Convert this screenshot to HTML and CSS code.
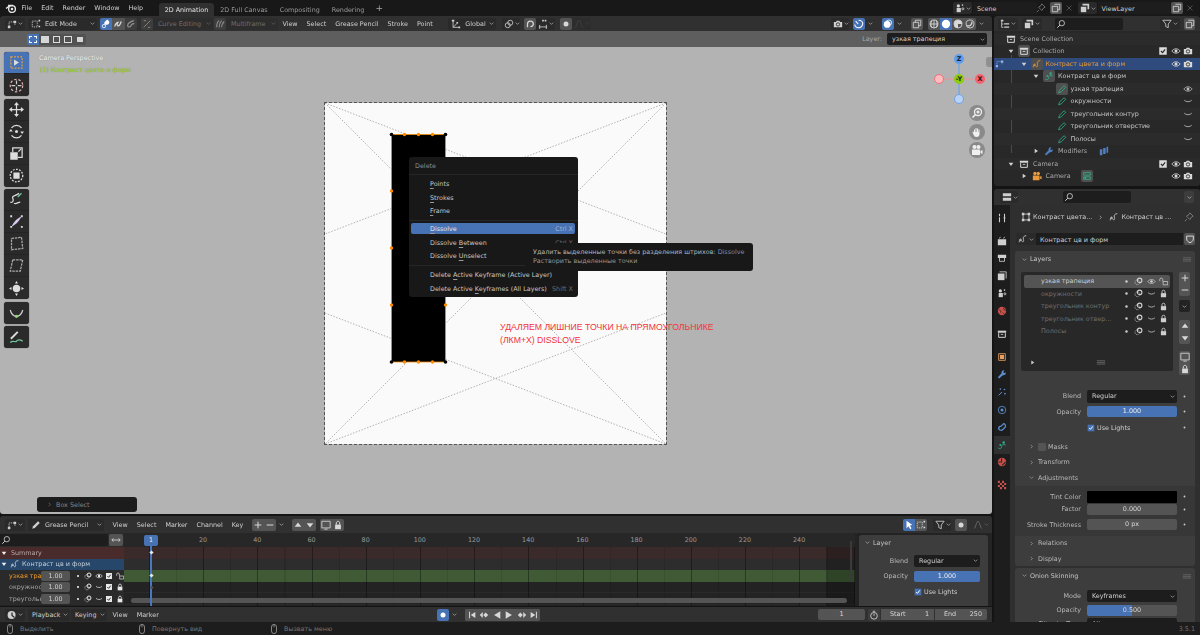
FILE: index.html
```html
<!DOCTYPE html>
<html lang="ru">
<head>
<meta charset="UTF-8">
<title>Blender</title>
<link rel="stylesheet" href="styles.css">
</head>
<body>
<svg class="defs" width="0" height="0">
  <symbol id="chev" viewBox="0 0 12 12"><path d="M3 4.500l3 3 3-3"/></symbol>
  <symbol id="right" viewBox="0 0 12 12"><path d="M4.500 3l3 3-3 3"/></symbol>
  <symbol id="tri-d" viewBox="0 0 12 12"><path class="fl" d="M2.500 4h7L6 9z"/></symbol>
  <symbol id="tri-r" viewBox="0 0 12 12"><path class="fl" d="M4 2.500v7L9 6z"/></symbol>
  <symbol id="logo" viewBox="0 0 12 12"><circle cx="7" cy="7" r="3.400" stroke-width="1.400"/><circle class="fl" cx="7" cy="7" r="1.300"/><path stroke-width="1.400" d="M1 6.500l4-3M3 3.500h5"/></symbol>
  <symbol id="gp-edit" viewBox="0 0 12 12"><path stroke-dasharray="1.500 1" d="M2.500 9V3.500h7V7"/><path class="fl" d="M1 8h3v3H1zM8 2h3v3H8z"/></symbol>
  <symbol id="box" viewBox="0 0 12 12"><path stroke-dasharray="1.600 1" d="M1.500 2.500h6v7h-6z"/><path class="fl" d="M9 1h2v2H9zM9 8h2v2H9z"/></symbol>
  <symbol id="gpo" viewBox="0 0 12 12"><path d="M1.500 10c0-4 2-3 3-1.500s3 1 2-2 1-4.500 3.500-4.500"/><circle cx="3" cy="7" r="1"/></symbol>
  <symbol id="gpd" viewBox="0 0 12 12"><path d="M1.500 9.500c2 1.500 4 1 4-1.500s2-3 5-2"/><circle class="fl" cx="8" cy="3" r="1.500"/><circle class="fl" cx="4" cy="6" r="1.200"/></symbol>
  <symbol id="pen" viewBox="0 0 12 12"><path d="M2 10.500l1-3 5.500-5.500 2 2L5 9.500z"/></symbol>
  <symbol id="pen-f" viewBox="0 0 12 12"><path class="fl" d="M1.500 10.500l1-3L8.500 1.500l2 2-6 6z"/></symbol>
  <symbol id="coll" viewBox="0 0 12 12"><path class="fl" d="M1 2h10v2.500H1z"/><path stroke-width="1.200" d="M2 5v5h8V5"/><path d="M4.500 6.500h3"/></symbol>
  <symbol id="eye" viewBox="0 0 12 12"><path d="M1 6c2.500-3.500 7.500-3.500 10 0-2.500 3.500-7.500 3.500-10 0z"/><circle class="fl" cx="6" cy="6" r="1.800"/></symbol>
  <symbol id="eye-off" viewBox="0 0 12 12"><path d="M1.500 5c2.500 2.400 6.500 2.400 9 0"/></symbol>
  <symbol id="cam" viewBox="0 0 12 12"><path class="fl" d="M1 3.500h2.500l1-1.500h3l1 1.500H11v6.500H1z"/><circle class="cut" cx="6" cy="6.500" r="2"/></symbol>
  <symbol id="check" viewBox="0 0 12 12"><path class="fl" d="M1.500 1.500h9v9h-9z"/><path class="cut" stroke-width="1.400" d="M3.500 6l2 2 3-4"/></symbol>
  <symbol id="check-on" viewBox="0 0 12 12"><path class="blue" d="M1 1h10v10H1z"/><path stroke="#fff" stroke-width="1.500" d="M3.200 6l2 2 3.500-4.500"/></symbol>
  <symbol id="lock" viewBox="0 0 12 12"><path class="fl" d="M2.500 5.500h7v5.500h-7z"/><path stroke-width="1.200" d="M4 5.500V3.500c0-2.500 4-2.500 4 0v2"/></symbol>
  <symbol id="unlock" viewBox="0 0 12 12"><path d="M5.500 6h6v4.500h-6z"/><path d="M1 5.500V3c0-2 4-2 4 0v3"/></symbol>
  <symbol id="mask" viewBox="0 0 12 12"><circle cx="4.500" cy="7" r="3.200" stroke-dasharray="1 .7"/><circle cx="7.500" cy="4.500" r="3" stroke-width="1.500"/></symbol>
  <symbol id="dot" viewBox="0 0 12 12"><circle class="fl" cx="6" cy="6" r="1.600"/></symbol>
  <symbol id="search" viewBox="0 0 12 12"><circle cx="7" cy="5" r="3.200"/><path stroke-width="1.200" d="M4.700 7.300L1.500 10.500"/></symbol>
  <symbol id="filter" viewBox="0 0 12 12"><path d="M1 1.500h10L7.500 6v4.500l-3-1.500V6z"/></symbol>
  <symbol id="pin" viewBox="0 0 12 12"><path d="M7 1l4 4-2 1-2 3-4-4 3-2zM3.500 8.500L1 11"/></symbol>
  <symbol id="copy" viewBox="0 0 12 12"><path d="M4 1.500h6.500V8H8.500"/><path d="M1.500 4h6.500v6.500H1.500z"/></symbol>
  <symbol id="close" viewBox="0 0 12 12"><path d="M3 3l6 6M9 3l-6 6"/></symbol>
  <symbol id="scene" viewBox="0 0 12 12"><path class="fl" d="M2 6h5v5H2z"/><circle class="fl" cx="4" cy="3.500" r="2"/><circle cx="9.500" cy="7" r="1.200"/><circle class="fl" cx="9" cy="2.500" r="1"/></symbol>
  <symbol id="layers" viewBox="0 0 12 12"><path class="fl" d="M3 1h8v6.500H9V3H3z"/><path class="fl" d="M1 4.500h6.500V11H1z"/></symbol>
  <symbol id="outl" viewBox="0 0 12 12"><path class="fl" d="M1 1h3v2H1zM5 5h6v1.500H5zM5 9h6v1.500H5z"/><path d="M2 3v7h2M2 6h2"/></symbol>
  <symbol id="prop" viewBox="0 0 12 12"><path class="fl" d="M1 1.500h10V5H1zM1 7h10v3.500H1z"/></symbol>
  <symbol id="snap" viewBox="0 0 12 12"><circle cx="7.500" cy="4.500" r="3"/><circle cx="4.500" cy="7.500" r="3"/></symbol>
  <symbol id="magnet" viewBox="0 0 12 12"><path stroke-width="1.500" d="M3 10V6a3.500 3.500 0 017 0c0 3-2.500 3-3.500 3"/></symbol>
  <symbol id="grid" viewBox="0 0 12 12"><path d="M1 9.500h10M2 7v5M10 7v5"/><path class="fl" d="M5 1h2v2H5zM8 1h2v2H8z"/></symbol>
  <symbol id="falloff" viewBox="0 0 12 12"><path d="M1 10.500c2.500-1 3-9 5-9s2.500 8 5 9"/></symbol>
  <symbol id="orient" viewBox="0 0 12 12"><path d="M2.500 2v8h8M2.500 10l5-5"/><path class="fl" d="M1 1h3v2H1zM9 9h2v2H9zM6.500 3.500h2v2h-2z"/></symbol>
  <symbol id="bezier" viewBox="0 0 12 12"><path d="M2 10L10 2M2 2h3M10 10H7"/></symbol>
  <symbol id="multi" viewBox="0 0 12 12"><path stroke-width="1.300" d="M2 10c0-5 1-7 3-8M5 10c0-4 1-6 3-8M8 10c0-3 1-5 3-7"/></symbol>
  <symbol id="brush1" viewBox="0 0 12 12"><path class="fl" d="M8 1c1 1 2 2 2 3.500S8 7 6 7 3 5 5 3s2-2 3-2z"/><circle cx="3.500" cy="8.500" r="2"/></symbol>
  <symbol id="brush2" viewBox="0 0 12 12"><path stroke-width="1.500" d="M2 9c1-3 2-5 4-5-2 2-1 5 1 4s2-4 3-5"/></symbol>
  <symbol id="brush3" viewBox="0 0 12 12"><path stroke-width="1.500" d="M9.500 2C6 3 2 5 2 8c0 2 3 2 4 0s3-3 4-2"/></symbol>
  <symbol id="gizmo" viewBox="0 0 12 12"><path stroke-width="1.300" d="M5.500 1.500c3 0 5 2 5 4s-2 5-5 5-4.500-2-4.500-4M2 2.500L5 6"/></symbol>
  <symbol id="overlay" viewBox="0 0 12 12"><circle class="fl" cx="5" cy="6.500" r="4"/><circle cx="7" cy="4.500" r="3.300"/></symbol>
  <symbol id="xray" viewBox="0 0 12 12"><path d="M1.500 4h6.500v6.500H1.500zM4 4V1.500h6.500V8H8"/></symbol>
  <symbol id="wire" viewBox="0 0 12 12"><circle cx="6" cy="6" r="4.800"/><path d="M1.200 6h9.600M6 1.200v9.600M3.500 2c-1.500 2-1.500 6 0 8M8.500 2c1.500 2 1.500 6 0 8"/></symbol>
  <symbol id="solid" viewBox="0 0 12 12"><circle class="fl" cx="6" cy="6" r="5"/></symbol>
  <symbol id="matp" viewBox="0 0 12 12"><circle cx="6" cy="6" r="4.800"/><path class="fl" d="M6 1.200a4.800 4.800 0 014.800 4.800H6v4.800A4.800 4.800 0 016 1.200z"/></symbol>
  <symbol id="rend" viewBox="0 0 12 12"><circle cx="6" cy="6" r="4.800"/><path stroke-width="1.500" d="M2.500 8c3 1 6-1 6-5"/></symbol>
  <symbol id="gp-vis" viewBox="0 0 12 12"><path d="M1 1.500h10v8H1zM4 11h4"/></symbol>
  <symbol id="up" viewBox="0 0 12 12"><path class="fl" d="M6 3l4 5H2z"/></symbol>
  <symbol id="down" viewBox="0 0 12 12"><path class="fl" d="M6 9l4-5H2z"/></symbol>
  <symbol id="plus" viewBox="0 0 12 12"><path stroke-width="1.200" d="M6 2v8M2 6h8"/></symbol>
  <symbol id="minus" viewBox="0 0 12 12"><path stroke-width="1.200" d="M2 6h8"/></symbol>
  <symbol id="arrows" viewBox="0 0 12 12"><path d="M1 6h10M3 4L1 6l2 2M9 4l2 2-2 2"/></symbol>
  <symbol id="shield" viewBox="0 0 12 12"><path stroke-width="1.200" d="M2 2.500h8V6c0 2.500-2 3.500-4 4.500C4 9.500 2 8.500 2 6z"/></symbol>
  <symbol id="grip" viewBox="0 0 12 12"><path d="M1 4.500h10M1 6.500h10M1 8.500h10"/></symbol>
  <symbol id="cursor" viewBox="0 0 12 12"><path class="fl" d="M3 1l7 5-3 .5L9 10l-1.500 1-2-3.500L3 10z"/></symbol>
  <symbol id="sel-box" viewBox="0 0 12 12"><path stroke="#e0a050" stroke-dasharray="1.500 1" d="M1.500 1.500h9v9h-9z"/><path class="fl" d="M4 3.500l4 2.500-4 2.500z"/></symbol>
  <symbol id="timeline" viewBox="0 0 12 12"><circle class="fl" cx="5.500" cy="6" r="4.800"/><path class="cut" stroke-width="1.500" d="M6 3v3.500L9 9"/></symbol>
  <symbol id="clock" viewBox="0 0 12 12"><circle cx="6" cy="7" r="4"/><path d="M6 7V4.500M4.500 1.500h3"/></symbol>
  <symbol id="rec" viewBox="0 0 12 12"><circle class="fl" cx="6" cy="6" r="3"/></symbol>
  <symbol id="j-start" viewBox="0 0 12 12"><path class="fl" d="M2.500 2h1.200v8H2.500zM10 2.500v7L4.500 6z"/></symbol>
  <symbol id="k-prev" viewBox="0 0 12 12"><path class="fl" d="M1 6l3.500-3.500v7zM5 6l3-3 3 3-3 3z"/></symbol>
  <symbol id="p-rev" viewBox="0 0 12 12"><path class="fl" d="M10 1.500v9L2.500 6z"/></symbol>
  <symbol id="p-for" viewBox="0 0 12 12"><path class="fl" d="M2 1.500v9L9.500 6z"/></symbol>
  <symbol id="k-next" viewBox="0 0 12 12"><path class="fl" d="M11 6L7.500 2.500v7zM7 6L4 3 1 6l3 3z"/></symbol>
  <symbol id="j-end" viewBox="0 0 12 12"><path class="fl" d="M9.500 2h-1.200v8h1.200zM2 2.500v7L7.500 6z"/></symbol>
  <symbol id="mouse" viewBox="0 0 12 12"><path d="M3 3.500a3 3 0 016 0v5a3 3 0 01-6 0z"/><path d="M6 1v3"/></symbol>
  <symbol id="wrench" viewBox="0 0 12 12"><path class="fl" d="M1 10l4.500-5c-.7-2 1-4 3.500-3.500L7.500 3.500l1 1.500L10.500 4c.5 2.500-1.500 4-3.500 3.500L2.500 11.500z"/></symbol>
  <symbol id="tool" viewBox="0 0 12 12"><path stroke-width="1.300" d="M3 1v3M3 5v6M9 1v3c0 2-1 2-1 2h2s-1 0-1-2M9 6v5"/></symbol>
  <symbol id="render" viewBox="0 0 12 12"><path class="fl" d="M1 4h10v7H1z"/><path d="M3 3l1-2M8 3l1-2"/></symbol>
  <symbol id="printer" viewBox="0 0 12 12"><path class="fl" d="M1 2h10v4H1z"/><path d="M3 6v4h6V6"/></symbol>
  <symbol id="image" viewBox="0 0 12 12"><path class="fl" d="M1 3h8v8H1z"/><path d="M3 1h8v8"/></symbol>
  <symbol id="world" viewBox="0 0 12 12"><circle class="fl" cx="6" cy="6" r="5"/><path class="cut" d="M2 4c2 1 3 2 2 4M8 2c-1 2 1 3 3 3M7 8l2 2"/></symbol>
  <symbol id="object" viewBox="0 0 12 12"><path stroke="#e8a060" d="M2 2h8v8H2z"/><path class="fl" d="M3.500 3.500h5v5h-5z"/></symbol>
  <symbol id="particle" viewBox="0 0 12 12"><path stroke-width="1.200" d="M2 10l4-4"/><circle class="fl" cx="9" cy="3" r="1"/><circle class="fl" cx="9.500" cy="8" r="1"/><circle class="fl" cx="4" cy="2.500" r="1"/></symbol>
  <symbol id="physics" viewBox="0 0 12 12"><circle cx="6" cy="6" r="4.500"/><circle class="fl" cx="6" cy="6" r="1.800"/></symbol>
  <symbol id="constraint" viewBox="0 0 12 12"><path stroke-width="1.500" d="M2 8a3 3 0 013-3l3-3a3 3 0 012 4l-3 3a3 3 0 01-5-1z"/></symbol>
  <symbol id="material" viewBox="0 0 12 12"><circle class="fl" cx="6" cy="6" r="5"/><path class="cut" stroke-width="1.300" d="M1.500 6h4V1.500M6 10l4.500-4"/></symbol>
  <symbol id="texture" viewBox="0 0 12 12"><path class="fl" d="M1 1h2.500v2.500H1zM6 1h2.500v2.500H6zM3.500 3.500H6V6H3.500zM8.500 3.500H11V6H8.500zM1 6h2.500v2.500H1zM6 6h2.500v2.500H6zM3.500 8.500H6V11H3.500zM8.500 8.500H11V11H8.500z"/></symbol>
  <symbol id="modobj" viewBox="0 0 12 12"><path d="M2.500 2.500h7v7h-7z"/><path class="fl" d="M1 1h3v3H1zM8 1h3v3H8zM1 8h3v3H1zM8 8h3v3H8z"/></symbol>
  <symbol id="modblue" viewBox="0 0 12 12"><path class="fl" d="M1 4h3v7H1zM5 2.500h3v7H5zM9 1h2v7H9z"/></symbol>
  <symbol id="camdata" viewBox="0 0 12 12"><path d="M2 2h8v3H2zM2 7h8v3H2z"/><circle class="fl" cx="4" cy="8.500" r="1.200"/></symbol>
  <symbol id="camobj" viewBox="0 0 12 12"><circle class="fl" cx="3.500" cy="3" r="2"/><circle class="fl" cx="7.500" cy="3" r="2"/><path class="fl" d="M1 5.500h8V11H1zM9.500 7l2-1v4l-2-1z"/></symbol>
  <symbol id="t-cursor" viewBox="0 0 12 12"><circle stroke="#d8a8a8" stroke-dasharray="2 1.500" cx="6" cy="6" r="5"/><path stroke="#ccc" d="M6 2v3M6 7v3M2 6h3M7 6h3"/></symbol>
  <symbol id="t-move" viewBox="0 0 12 12"><path d="M6 1v10M1 6h10"/><path class="fl" d="M6 0l2 2.500H4zM6 12l2-2.500H4zM0 6l2.500 2v-4zM12 6L9.500 8V4z"/></symbol>
  <symbol id="t-rotate" viewBox="0 0 12 12"><path d="M2 3a5 5 0 018 0M2 9a5 5 0 008 0"/><circle class="fl" cx="6" cy="6" r="1.200"/><path class="fl" d="M0 6h3L1.500 4zM12 6H9l1.500 2z"/></symbol>
  <symbol id="t-scale" viewBox="0 0 12 12"><path class="fl" d="M1 5h6v6H1z"/><path d="M3 5V1.500h7.500V9H7M7.500 4.500L9.500 2.500"/></symbol>
  <symbol id="t-trans" viewBox="0 0 12 12"><circle stroke-dasharray="1.500 1" cx="6" cy="6" r="5"/><path class="fl" d="M3.500 3.500h5v5h-5z"/></symbol>
  <symbol id="t-bend" viewBox="0 0 12 12"><path d="M1 8c2 1 3-1 2-3s3-2 5-4M4 9c2 1 3-1 5-1"/><path stroke="#6fc79e" d="M7 4l3-3"/></symbol>
  <symbol id="t-shear" viewBox="0 0 12 12"><path fill="#d9c8f0" d="M10 2C7 3 4 6 2 10 5 9 8 6 10 2z" stroke="none"/><path class="fl" d="M1 1h1.500v1.500H1zM9.500 9.500H11V11H9.500zM1 9.500h1.500V11H1zM9.500 1H11v1.500H9.500z"/></symbol>
  <symbol id="t-env" viewBox="0 0 12 12"><path d="M2 2l8-1 1 9-9 1z" stroke-dasharray="2 .7" stroke="#aaa"/></symbol>
  <symbol id="t-para" viewBox="0 0 12 12"><path d="M3 1.500h8L9 10.500H1z" stroke-dasharray="2 .7" stroke="#aaa"/></symbol>
  <symbol id="t-noise" viewBox="0 0 12 12"><circle class="fl" cx="6" cy="6" r="3"/><path class="fl" d="M6 0l1.200 2H4.800zM6 12l1.200-2H4.800zM0 6l2 1.200V4.800zM12 6l-2 1.200V4.800z"/></symbol>
  <symbol id="t-radius" viewBox="0 0 12 12"><path stroke="#ccc" d="M1 4c1 4 3 5 5 5s4-1 5-5"/><circle fill="#8fd97a" stroke="none" cx="6" cy="9" r="1.300"/></symbol>
  <symbol id="t-annot" viewBox="0 0 12 12"><path stroke-width="1.500" d="M1.500 7L7 1.500"/><path stroke="#6fc79e" d="M1 10c2-2 4 0 5-1s2-2 5 0"/></symbol>
  <symbol id="zoom-g" viewBox="0 0 12 12"><circle cx="7" cy="5" r="3.500" stroke-width="1.300"/><path stroke-width="1.600" d="M4.500 7.500L1.500 10.500M7 3.500v3M5.500 5h3"/></symbol>
  <symbol id="hand-g" viewBox="0 0 12 12"><path class="fl" d="M3 6V3.500h1V6h.5V2h1v4h.5V2.500h1V6h.5V3.500h1V8c0 2-1 3-3 3S3 10 2 7.500l-.5-2L3 6z"/></symbol>
</svg>

<div class="app">
  <div class="topbar">
    <svg class="ic logo"><use href="#logo"/></svg>
    <span class="mi">File</span><span class="mi">Edit</span><span class="mi">Render</span><span class="mi">Window</span><span class="mi">Help</span>
    <span class="tab tab-on">2D Animation</span><span class="tab">2D Full Canvas</span><span class="tab">Compositing</span><span class="tab">Rendering</span>
    <span class="tab-add">+</span>
    <div class="top-right">
      <span class="dd scene-dd"><svg class="ic"><use href="#scene"/></svg><svg class="ic-s"><use href="#chev"/></svg></span>
      <span class="field scene-name">Scene</span>
      <svg class="ic dim pin-top"><use href="#pin"/></svg>
      <span class="btn top-copy"><svg class="ic"><use href="#copy"/></svg></span>
      <svg class="ic top-x"><use href="#close"/></svg>
      <span class="dd scene-dd vl-dd"><svg class="ic"><use href="#layers"/></svg><svg class="ic-s"><use href="#chev"/></svg></span>
      <span class="field vl-name">ViewLayer</span>
      <span class="btn top-copy"><svg class="ic"><use href="#copy"/></svg></span>
      <svg class="ic top-x"><use href="#close"/></svg>
    </div>
  </div>

  <div class="main">
    <div class="left">
      <div class="view">
        <div class="hdr">
          <span class="dd et"><svg class="ic"><use href="#gp-edit"/></svg><svg class="ic-s"><use href="#chev"/></svg></span>
          <span class="dd mode"><svg class="ic"><use href="#box"/></svg><span class="grow">Edit Mode</span><svg class="ic-s"><use href="#chev"/></svg></span>
          <span class="seg seg3"><span class="btn on"><svg class="ic"><use href="#brush1"/></svg></span><span class="btn"><svg class="ic"><use href="#brush2"/></svg></span><span class="btn off"><svg class="ic"><use href="#brush3"/></svg></span></span>
          <span class="btn curve-btn off"><svg class="ic"><use href="#bezier"/></svg></span>
          <span class="dd muted curve-dd"><span class="grow">Curve Editing</span><svg class="ic-s"><use href="#chev"/></svg></span>
          <span class="btn off"><svg class="ic"><use href="#multi"/></svg></span>
          <span class="dd muted multi-dd"><span class="grow">Multiframe</span><svg class="ic-s"><use href="#chev"/></svg></span>
          <span class="mi">View</span><span class="mi">Select</span><span class="mi">Grease Pencil</span><span class="mi">Stroke</span><span class="mi">Point</span>
          <span class="dd global"><svg class="ic"><use href="#orient"/></svg><span class="grow">Global</span><svg class="ic-s"><use href="#chev"/></svg></span>
          <span class="dd snap"><svg class="ic"><use href="#snap"/></svg><svg class="ic-s"><use href="#chev"/></svg></span>
          <span class="btn magnet"><svg class="ic"><use href="#magnet"/></svg></span>
          <span class="dd snap-t"><svg class="ic"><use href="#grid"/></svg><svg class="ic-s"><use href="#chev"/></svg></span>
          <span class="btn prop-btn"><svg class="ic"><use href="#rec"/></svg></span>
          <span class="dd muted snap-t dimmer"><svg class="ic"><use href="#falloff"/></svg><svg class="ic-s"><use href="#chev"/></svg></span>
          <div class="hdr-right">
            <span class="dd gz"><svg class="ic"><use href="#cam"/></svg><svg class="ic-s"><use href="#chev"/></svg></span>
            <span class="btn on"><svg class="ic"><use href="#gizmo"/></svg></span><svg class="ic-s chev-wide"><use href="#chev"/></svg>
            <span class="btn on"><svg class="ic"><use href="#overlay"/></svg></span><svg class="ic-s chev-mid"><use href="#chev"/></svg>
            <span class="btn xray"><svg class="ic"><use href="#xray"/></svg></span>
            <span class="seg shade"><span class="btn"><svg class="ic"><use href="#wire"/></svg></span><span class="btn on"><svg class="ic"><use href="#solid"/></svg></span><span class="btn"><svg class="ic"><use href="#matp"/></svg></span><span class="btn"><svg class="ic"><use href="#rend"/></svg></span></span>
            <svg class="ic-s chev-gap"><use href="#chev"/></svg>
          </div>
        </div>
        <div class="hdr2">
          <span class="seg sel-modes"><span class="tm on"></span><span class="tm t2"></span><span class="tm t3"></span><span class="tm t4"></span><span class="tm t5"></span></span>
          <div class="hdr2-right"><span class="lay-lbl">Layer:</span><span class="dark-dd"><span class="grow">узкая трапеция</span><svg class="ic-s"><use href="#chev"/></svg></span></div>
        </div>
        <div class="canvas">
          <div class="vp-text">
            <div>Camera Perspective</div>
            <div class="vp-green">(1) Контраст цвета и форм</div>
          </div>

          <div class="toolbar">
            <div class="tgroup">
              <span class="tool on"><svg class="ic-t"><use href="#sel-box"/></svg></span>
              <span class="tool"><svg class="ic-t"><use href="#t-cursor"/></svg></span>
            </div>
            <div class="tgroup">
              <span class="tool"><svg class="ic-t"><use href="#t-move"/></svg></span>
              <span class="tool"><svg class="ic-t"><use href="#t-rotate"/></svg></span>
              <span class="tool"><svg class="ic-t"><use href="#t-scale"/></svg></span>
              <span class="tool"><svg class="ic-t"><use href="#t-trans"/></svg></span>
            </div>
            <div class="tgroup">
              <span class="tool"><svg class="ic-t"><use href="#t-bend"/></svg></span>
              <span class="tool"><svg class="ic-t"><use href="#t-shear"/></svg></span>
              <span class="tool"><svg class="ic-t"><use href="#t-env"/></svg></span>
              <span class="tool"><svg class="ic-t"><use href="#t-para"/></svg></span>
              <span class="tool"><svg class="ic-t"><use href="#t-noise"/></svg></span>
            </div>
            <div class="tgroup"><span class="tool"><svg class="ic-t"><use href="#t-radius"/></svg></span></div>
            <div class="tgroup"><span class="tool"><svg class="ic-t"><use href="#t-annot"/></svg></span></div>
          </div>

          <div class="sheet">
            <svg class="sheet-svg" viewBox="0 0 341 341">
              <g class="guides">
                <path d="M0 0L341 341M341 0L0 341M0 0L341 131M341 0L0 131M0 210L341 341M0 341L341 210"/>
              </g>
              <path class="stroke-shape" d="M66.500 31.500H120.500V259H66.500z"/>
              <g class="pt-orange">
                <circle cx="79.500" cy="31.500" r="1.700"/><circle cx="93.500" cy="31.500" r="1.700"/><circle cx="107.500" cy="31.500" r="1.700"/>
                <circle cx="79.500" cy="259" r="1.700"/><circle cx="93.500" cy="259" r="1.700"/><circle cx="107.500" cy="259" r="1.700"/>
                <circle cx="66.500" cy="88" r="1.700"/><circle cx="66.500" cy="145" r="1.700"/><circle cx="66.500" cy="202" r="1.700"/>
                <circle cx="120.500" cy="88" r="1.700"/><circle cx="120.500" cy="145" r="1.700"/><circle cx="120.500" cy="202" r="1.700"/>
              </g>
              <g class="pt-black">
                <circle cx="66.500" cy="31.500" r="1.800"/><circle cx="120.500" cy="31.500" r="1.800"/><circle cx="66.500" cy="259" r="1.800"/><circle cx="120.500" cy="259" r="1.800"/>
              </g>
            </svg>
            <div class="note">УДАЛЯЕМ ЛИШНИЕ ТОЧКИ НА ПРЯМОУГОЛЬНИКЕ<br>(ЛКМ+Х) DISSLOVE</div>
          </div>

          <div class="popup">
            <div class="pop-title">Delete</div>
            <div class="pop-item"><span><u>P</u>oints</span></div>
            <div class="pop-item"><span><u>S</u>trokes</span></div>
            <div class="pop-item"><span><u>F</u>rame</span></div>
            <div class="pop-sep"></div>
            <div class="pop-item hot"><span><u>D</u>issolve</span><span class="sc">Ctrl X</span></div>
            <div class="pop-item"><span>Dissolve <u>B</u>etween</span><span class="sc">Ctrl X</span></div>
            <div class="pop-item"><span>Dissolve <u>U</u>nselect</span></div>
            <div class="pop-sep"></div>
            <div class="pop-item"><span>Delete <u>A</u>ctive Keyframe (Active Layer)</span></div>
            <div class="pop-item"><span>Delete Active <u>K</u>eyframes (All Layers)</span><span class="sc">Shift X</span></div>
          </div>

          <div class="tip">
            <div>Удалить выделенные точки без разделения штрихов: <span class="tip-op">Dissolve</span></div>
            <div class="tip-dim">Растворить выделенные точки</div>
          </div>

          <svg class="axis" viewBox="0 0 60 60">
            <path class="ax-b" d="M30 10V50"/><path class="ax-r" d="M10 30H50"/>
            <circle class="n-b" cx="30" cy="10" r="5"/><text class="ax-t" x="30" y="12.300">Z</text>
            <circle class="n-bp" cx="30" cy="50" r="4.500"/>
            <circle class="n-rp" cx="10" cy="30" r="4.500"/>
            <circle class="n-r" cx="51" cy="30" r="5"/><text class="ax-t" x="51" y="32.300">X</text>
            <circle class="n-g" cx="30" cy="30" r="5"/><text class="ax-t" x="30" y="32.300">-Y</text>
          </svg>
          <div class="nav-btns">
            <span class="nav"><svg class="ic-t"><use href="#zoom-g"/></svg></span>
            <span class="nav"><svg class="ic-t"><use href="#hand-g"/></svg></span>
            <span class="nav"><svg class="ic-t"><use href="#camobj"/></svg></span>
          </div>
          <div class="side-tab"></div>

          <div class="last-op"><svg class="ic-s"><use href="#right"/></svg>Box Select</div>
        </div>
      </div>

      <div class="timeline">
        <div class="hdr tl-hdr">
          <span class="dd et"><svg class="ic"><use href="#gp-edit"/></svg><svg class="ic-s"><use href="#chev"/></svg></span>
          <span class="dd gp-dd"><svg class="ic"><use href="#pen-f"/></svg><span class="grow">Grease Pencil</span><svg class="ic-s"><use href="#chev"/></svg></span>
          <span class="mi">View</span><span class="mi">Select</span><span class="mi">Marker</span><span class="mi">Channel</span><span class="mi">Key</span>
          <span class="seg tl-add"><span class="btn"><svg class="ic"><use href="#plus"/></svg></span><span class="btn"><svg class="ic"><use href="#minus"/></svg></span></span><svg class="ic-s"><use href="#chev"/></svg>
          <span class="seg tl-arrows"><span class="btn"><svg class="ic"><use href="#up"/></svg></span><span class="btn"><svg class="ic"><use href="#down"/></svg></span></span>
          <span class="seg tl-vis"><span class="btn"><svg class="ic"><use href="#gp-vis"/></svg></span><span class="btn"><svg class="ic"><use href="#lock"/></svg></span></span>
          <div class="hdr-right">
            <span class="seg"><span class="btn on"><svg class="ic"><use href="#cursor"/></svg></span><span class="btn"><svg class="ic"><use href="#box"/></svg></span></span>
            <span class="dd tl-filter"><svg class="ic"><use href="#filter"/></svg><svg class="ic-s"><use href="#chev"/></svg></span>
            <span class="btn"><svg class="ic"><use href="#rec"/></svg></span>
            <span class="dd muted tl-fall"><svg class="ic"><use href="#falloff"/></svg><svg class="ic-s"><use href="#chev"/></svg></span>
          </div>
        </div>
        <div class="tl-body">
          <div class="channels">
            <div class="ch-search"><span class="ch-input"><svg class="ic"><use href="#search"/></svg></span><span class="btn ch-sw"><svg class="ic"><use href="#arrows"/></svg></span></div>
            <div class="ch ch-sum"><svg class="ic-a"><use href="#tri-d"/></svg><span>Summary</span></div>
            <div class="ch ch-obj"><svg class="ic-a"><use href="#tri-d"/></svg><svg class="ic"><use href="#gpo"/></svg><span>Контраст цв и форм</span></div>
            <div class="ch ch-lay ch-act"><span class="ch-name">узкая тра</span><span class="ch-val">1.00</span><svg class="ic-f"><use href="#dot"/></svg><svg class="ic-f"><use href="#mask"/></svg><svg class="ic-f"><use href="#eye"/></svg><svg class="ic-f"><use href="#check"/></svg><svg class="ic-f"><use href="#unlock"/></svg></div>
            <div class="ch ch-lay"><span class="ch-name">окружнос</span><span class="ch-val">1.00</span><svg class="ic-f"><use href="#dot"/></svg><svg class="ic-f"><use href="#mask"/></svg><svg class="ic-f"><use href="#eye-off"/></svg><svg class="ic-f"><use href="#check"/></svg><svg class="ic-f"><use href="#lock"/></svg></div>
            <div class="ch ch-lay"><span class="ch-name">треугольн</span><span class="ch-val">1.00</span><svg class="ic-f"><use href="#dot"/></svg><svg class="ic-f"><use href="#mask"/></svg><svg class="ic-f"><use href="#eye-off"/></svg><svg class="ic-f"><use href="#check"/></svg><svg class="ic-f"><use href="#lock"/></svg></div>
          </div>
          <div class="dope">
            <div class="ruler"><span>20</span><span>40</span><span>60</span><span>80</span><span>100</span><span>120</span><span>140</span><span>160</span><span>180</span><span>200</span><span>220</span><span>240</span></div>
            <div class="rows">
              <div class="r r-sum"></div><div class="r r-obj"></div><div class="r r-act"></div><div class="r r-lay"></div><div class="r r-lay"></div>
            </div>
            <div class="out-range"></div>
            <div class="hscroll"></div>
            <div class="vscroll"></div>
            <div class="playhead"></div>
            <div class="frame-tag">1</div>
            <div class="key k1"></div><div class="key k2"></div><div class="key k3"></div>
          </div>
          <div class="tl-side">
            <div class="panel tl-panel">
              <div class="ph"><svg class="ic-s"><use href="#chev"/></svg><span class="grow">Layer</span></div>
              <div class="pr"><label>Blend</label><span class="dark-dd"><span class="grow">Regular</span><svg class="ic-s"><use href="#chev"/></svg></span></div>
              <div class="pr"><label>Opacity</label><span class="num num-on">1.000</span></div>
              <div class="pr"><label></label><span class="cb"><svg class="ic-c"><use href="#check-on"/></svg>Use Lights</span></div>
            </div>
          </div>
        </div>
        <div class="hdr play-hdr">
          <span class="dd et"><svg class="ic"><use href="#timeline"/></svg><svg class="ic-s"><use href="#chev"/></svg></span>
          <span class="dd pb-dd"><span class="grow">Playback</span><svg class="ic-s"><use href="#chev"/></svg></span>
          <span class="dd kb-dd"><span class="grow">Keying</span><svg class="ic-s"><use href="#chev"/></svg></span>
          <span class="mi">View</span><span class="mi">Marker</span>
          <span class="btn on rec-btn"><svg class="ic"><use href="#rec"/></svg></span><svg class="ic-s chev-gap"><use href="#chev"/></svg>
          <span class="seg transport"><span class="btn"><svg class="ic"><use href="#j-start"/></svg></span><span class="btn"><svg class="ic"><use href="#k-prev"/></svg></span><span class="btn"><svg class="ic"><use href="#p-rev"/></svg></span><span class="btn"><svg class="ic"><use href="#p-for"/></svg></span><span class="btn"><svg class="ic"><use href="#k-next"/></svg></span><span class="btn"><svg class="ic"><use href="#j-end"/></svg></span></span>
          <div class="hdr-right">
            <span class="num cur-frame">1</span>
            <span class="btn clock"><svg class="ic"><use href="#clock"/></svg></span>
            <span class="num range r-start"><span>Start</span><span>1</span></span>
            <span class="num range r-end"><span>End</span><span>250</span></span>
          </div>
        </div>
      </div>
    </div>

    <div class="right">
      <div class="outliner">
        <div class="hdr out-hdr">
          <span class="dd out-dd"><svg class="ic"><use href="#outl"/></svg><svg class="ic-s"><use href="#chev"/></svg></span>
          <span class="dd out-dd"><svg class="ic"><use href="#layers"/></svg><svg class="ic-s"><use href="#chev"/></svg></span>
          <span class="search out-search"><svg class="ic"><use href="#search"/></svg></span>
          <span class="dd out-filter"><svg class="ic"><use href="#filter"/></svg><svg class="ic-s"><use href="#chev"/></svg></span>
          <span class="btn out-new"><svg class="ic"><use href="#copy"/></svg></span>
        </div>
        <div class="tree">
          <div class="tree-line"></div>
          <div class="o l0"><span class="ar"></span><span class="oi"><svg class="ic"><use href="#coll"/></svg></span><span class="ot dimt">Scene Collection</span></div>
          <div class="o l1"><svg class="ar"><use href="#tri-d"/></svg><span class="oi boxed"><svg class="ic"><use href="#coll"/></svg></span><span class="ot dimt">Collection</span><span class="fl3"><svg class="ic"><use href="#check"/></svg><svg class="ic"><use href="#eye"/></svg><svg class="ic"><use href="#cam"/></svg></span></div>
          <div class="o l2 sel"><svg class="sel-mode"><use href="#gp-edit"/></svg><svg class="ar"><use href="#tri-d"/></svg><span class="oi boxed o-org"><svg class="ic"><use href="#gpo"/></svg></span><span class="ot org">Контраст цвета и форм</span><span class="fl3"><svg class="ic"><use href="#eye"/></svg><svg class="ic"><use href="#cam"/></svg></span></div>
          <div class="o l3"><svg class="ar"><use href="#tri-d"/></svg><span class="oi boxed o-grn"><svg class="ic"><use href="#gpd"/></svg></span><span class="ot">Контраст цв и форм</span></div>
          <div class="o l4"><span class="ar"></span><span class="oi boxed o-grn"><svg class="ic"><use href="#pen"/></svg></span><span class="ot">узкая трапеция</span><span class="fl3 fl-one"><svg class="ic"><use href="#eye"/></svg></span></div>
          <div class="o l4"><span class="ar"></span><span class="oi o-grn"><svg class="ic"><use href="#pen"/></svg></span><span class="ot">окружности</span><span class="fl3 fl-one"><svg class="ic"><use href="#eye-off"/></svg></span></div>
          <div class="o l4"><span class="ar"></span><span class="oi o-grn"><svg class="ic"><use href="#pen"/></svg></span><span class="ot">треугольник контур</span><span class="fl3 fl-one"><svg class="ic"><use href="#eye-off"/></svg></span></div>
          <div class="o l4"><span class="ar"></span><span class="oi o-grn"><svg class="ic"><use href="#pen"/></svg></span><span class="ot">треугольник отверстие</span><span class="fl3 fl-one"><svg class="ic"><use href="#eye-off"/></svg></span></div>
          <div class="o l4"><span class="ar"></span><span class="oi o-grn"><svg class="ic"><use href="#pen"/></svg></span><span class="ot">Полосы</span><span class="fl3 fl-one"><svg class="ic"><use href="#eye-off"/></svg></span></div>
          <div class="o l3"><svg class="ar"><use href="#tri-r"/></svg><span class="oi o-blu"><svg class="ic"><use href="#wrench"/></svg></span><span class="ot dimt">Modifiers</span><span class="oi o-blu o-extra"><svg class="ic"><use href="#modblue"/></svg></span></div>
          <div class="o l1"><svg class="ar"><use href="#tri-d"/></svg><span class="oi"><svg class="ic"><use href="#coll"/></svg></span><span class="ot dimt">Camera</span><span class="fl3"><svg class="ic"><use href="#check"/></svg><svg class="ic"><use href="#eye"/></svg><svg class="ic"><use href="#cam"/></svg></span></div>
          <div class="o l2"><svg class="ar"><use href="#tri-r"/></svg><span class="oi o-org"><svg class="ic"><use href="#camobj"/></svg></span><span class="ot dimt">Camera</span><span class="oi boxed o-grn o-extra2"><svg class="ic"><use href="#camdata"/></svg></span><span class="fl3"><svg class="ic"><use href="#eye"/></svg><svg class="ic"><use href="#cam"/></svg></span></div>
        </div>
      </div>

      <div class="props">
        <div class="hdr prop-hdr">
          <span class="dd prop-et"><svg class="ic"><use href="#prop"/></svg><svg class="ic-s"><use href="#chev"/></svg></span>
          <span class="search prop-search"><svg class="ic"><use href="#search"/></svg></span>
          <span class="btn prop-opt"><svg class="ic-s"><use href="#chev"/></svg></span>
        </div>
        <div class="prop-body">
          <div class="ptabs">
            <span class="pt first"><svg class="ic"><use href="#tool"/></svg></span>
            <span class="pt gap"><svg class="ic"><use href="#render"/></svg></span>
            <span class="pt"><svg class="ic"><use href="#printer"/></svg></span>
            <span class="pt"><svg class="ic"><use href="#image"/></svg></span>
            <span class="pt"><svg class="ic"><use href="#scene"/></svg></span>
            <span class="pt c-red"><svg class="ic"><use href="#world"/></svg></span>
            <span class="pt gap"><svg class="ic"><use href="#coll"/></svg></span>
            <span class="pt gap c-org"><svg class="ic"><use href="#object"/></svg></span>
            <span class="pt c-blu"><svg class="ic"><use href="#wrench"/></svg></span>
            <span class="pt c-blu"><svg class="ic"><use href="#particle"/></svg></span>
            <span class="pt c-blu"><svg class="ic"><use href="#physics"/></svg></span>
            <span class="pt c-blu"><svg class="ic"><use href="#constraint"/></svg></span>
            <span class="pt pt-on"><svg class="ic"><use href="#gpd"/></svg></span>
            <span class="pt c-red"><svg class="ic"><use href="#material"/></svg></span>
            <span class="pt gap c-red"><svg class="ic"><use href="#texture"/></svg></span>
          </div>
          <div class="pcontent">
            <div class="crumb">
              <svg class="ic"><use href="#modobj"/></svg><span>Контраст цвета...</span><svg class="ic-s crumb-sep"><use href="#right"/></svg><svg class="ic"><use href="#gpo"/></svg><span class="grow">Контраст цв ...</span><svg class="ic dim"><use href="#pin"/></svg>
            </div>
            <div class="datablock">
              <span class="dd db-dd"><svg class="ic"><use href="#gpo"/></svg><svg class="ic-s"><use href="#chev"/></svg></span>
              <span class="db-name">Контраст цв и форм</span>
              <span class="btn db-shield"><svg class="ic"><use href="#shield"/></svg></span>
            </div>
            <div class="panel layers-panel">
              <div class="ph"><svg class="ic-s"><use href="#chev"/></svg><span class="grow">Layers</span><svg class="ic dimmer"><use href="#grip"/></svg></div>
              <div class="list-wrap">
                <div class="list">
                  <div class="li li-on"><span class="grow">узкая трапеция</span><svg class="ic-l"><use href="#dot"/></svg><svg class="ic-l"><use href="#mask"/></svg><svg class="ic-l"><use href="#eye"/></svg><svg class="ic-l"><use href="#unlock"/></svg></div>
                  <div class="li"><span class="grow">окружности</span><svg class="ic-l"><use href="#dot"/></svg><svg class="ic-l"><use href="#mask"/></svg><svg class="ic-l"><use href="#eye-off"/></svg><svg class="ic-l"><use href="#lock"/></svg></div>
                  <div class="li"><span class="grow">треугольник контур</span><svg class="ic-l"><use href="#dot"/></svg><svg class="ic-l"><use href="#mask"/></svg><svg class="ic-l"><use href="#eye-off"/></svg><svg class="ic-l"><use href="#lock"/></svg></div>
                  <div class="li"><span class="grow">треугольник отвер...</span><svg class="ic-l"><use href="#dot"/></svg><svg class="ic-l"><use href="#mask"/></svg><svg class="ic-l"><use href="#eye-off"/></svg><svg class="ic-l"><use href="#lock"/></svg></div>
                  <div class="li"><span class="grow">Полосы</span><svg class="ic-l"><use href="#dot"/></svg><svg class="ic-l"><use href="#mask"/></svg><svg class="ic-l"><use href="#eye-off"/></svg><svg class="ic-l"><use href="#lock"/></svg></div>
                  <div class="list-foot"><svg class="ic-s"><use href="#tri-r"/></svg><svg class="ic grip-mid"><use href="#grip"/></svg></div>
                </div>
                <div class="list-btns">
                  <span class="vseg"><span class="btn"><svg class="ic"><use href="#plus"/></svg></span><span class="btn"><svg class="ic"><use href="#minus"/></svg></span></span>
                  <span class="btn list-more"><svg class="ic-s"><use href="#chev"/></svg></span>
                  <span class="vseg"><span class="btn"><svg class="ic"><use href="#up"/></svg></span><span class="btn"><svg class="ic"><use href="#down"/></svg></span></span>
                  <span class="vseg"><span class="btn"><svg class="ic"><use href="#gp-vis"/></svg></span><span class="btn"><svg class="ic"><use href="#lock"/></svg></span></span>
                </div>
              </div>
              <div class="pr pr-blend"><label>Blend</label><span class="dark-dd"><span class="grow">Regular</span><svg class="ic-s"><use href="#chev"/></svg></span><svg class="ic-d"><use href="#dot"/></svg></div>
              <div class="pr pr-op"><label>Opacity</label><span class="num num-on">1.000</span><svg class="ic-d"><use href="#dot"/></svg></div>
              <div class="pr pr-op"><label></label><span class="cb"><svg class="ic-c"><use href="#check-on"/></svg>Use Lights</span><svg class="ic-d"><use href="#dot"/></svg></div>
              <div class="sub sub-first"><svg class="ic-s"><use href="#right"/></svg><span class="mask-box"></span><span>Masks</span></div>
              <div class="sub"><svg class="ic-s"><use href="#right"/></svg><span>Transform</span></div>
              <div class="sub"><svg class="ic-s"><use href="#chev"/></svg><span>Adjustments</span></div>
              <div class="sub-body">
                <div class="pr pr-tint"><label>Tint Color</label><span class="swatch"></span><svg class="ic-d"><use href="#dot"/></svg></div>
                <div class="pr pr-tint"><label>Factor</label><span class="num">0.000</span><svg class="ic-d"><use href="#dot"/></svg></div>
                <div class="pr pr-stroke"><label>Stroke Thickness</label><span class="num">0 px</span><svg class="ic-d"><use href="#dot"/></svg></div>
              </div>
              <div class="sub"><svg class="ic-s"><use href="#right"/></svg><span>Relations</span></div>
              <div class="sub"><svg class="ic-s"><use href="#right"/></svg><span>Display</span></div>
            </div>
            <div class="panel onion-panel">
              <div class="ph"><svg class="ic-s"><use href="#chev"/></svg><span class="grow">Onion Skinning</span><svg class="ic dimmer"><use href="#grip"/></svg></div>
              <div class="pr pr-mode"><label>Mode</label><span class="dark-dd"><span class="grow">Keyframes</span><svg class="ic-s"><use href="#chev"/></svg></span></div>
              <div class="pr pr-half"><label>Opacity</label><span class="num num-half">0.500</span></div>
              <div class="pr pr-half"><label>Filter by Type</label><span class="dark-dd"><span class="grow">All</span><svg class="ic-s"><use href="#chev"/></svg></span></div>
            </div>
          </div>
        </div>
      </div>
    </div>
  </div>

  <div class="status">
    <span class="st"><svg class="ic"><use href="#mouse"/></svg>Выделить</span>
    <span class="st"><svg class="ic"><use href="#mouse"/></svg>Повернуть вид</span>
    <span class="st"><svg class="ic"><use href="#mouse"/></svg>Вызвать меню</span>
    <span class="version">3.5.1</span>
  </div>
</div>
</body>
</html>
```

FILE: styles.css
```css
* {
    box-sizing: border-box;
}

html, body {
    margin: 0;
    height: 100%;
    background: #141414;
    overflow: hidden;
}

.defs {
    position: absolute;
}

.fl {
    fill: currentColor;
    stroke: none;
}

.cut {
    fill: none;
    stroke: #2a2a2a;
}

.blue {
    fill: #4772b3;
    stroke: none;
}

svg {
    fill: none;
    stroke: currentColor;
    stroke-width: 1;
    flex: none;
}

.ic {
    width: 10px;
    height: 10px;
}

.ic-s {
    width: 7px;
    height: 7px;
}

.ic-t {
    width: 15px;
    height: 15px;
}

.grow {
    flex: 1;
}

.dim {
    opacity: 0.55;
}

.dimmer {
    opacity: 0.3;
}

.app {
    width: 1200px;
    height: 635px;
    display: flex;
    flex-direction: column;
    font-family: "DejaVu Sans", sans-serif;
    font-size: 6.4px;
    color: #cfcfcf;
    filter: blur(0.4px);
}

/* top bar */
.topbar {
    height: 16px;
    display: flex;
    align-items: center;
    background: #181818;
    padding-left: 5px;
    flex: none;
}

.logo {
    width: 12px;
    height: 12px;
    color: #e6e6e6;
}

.mi {
    padding: 0 4.500px;
    white-space: nowrap;
}

.tab {
    height: 13px;
    margin-top: 3px;
    padding: 3px 6px 0 6px;
    color: #9a9a9a;
    border-radius: 3px 3px 0 0;
    white-space: nowrap;
}

.tab-on {
    background: #303030;
    color: #e4e4e4;
    margin-left: 11px;
}

.tab-add {
    margin-left: 5px;
    font-size: 9px;
    color: #a8a8a8;
}

.top-right {
    position: absolute;
    top: 2px;
    left: 953px;
    width: 245px;
    height: 12px;
    display: flex;
    align-items: center;
}

.scene-dd {
    width: 19px;
    height: 12px;
    background: #2a2a2a;
    padding: 0 1px;
}

.vl-dd {
    margin-left: 1px;
}

.field {
    height: 12px;
    background: #1d1d1d;
    padding: 2.500px 4px;
    margin-left: 1px;
}

.scene-name {
    width: 65px;
}

.vl-name {
    width: 74px;
}

.pin-top {
    margin: 0 3px 0 -1px;
}

.top-copy {
    width: 12px;
    height: 12px;
    background: #4a4a4a;
    margin-left: 1px;
}

.top-x {
    margin: 0 3px 0 2px;
    opacity: 0.35;
}

/* layout */
.main {
    height: 606px;
    display: flex;
    flex: none;
}

.left {
    width: 992px;
    display: flex;
    flex-direction: column;
    flex: none;
}

.right {
    width: 206px;
    margin-left: 2px;
    display: flex;
    flex-direction: column;
}

.view {
    height: 498px;
    display: flex;
    flex-direction: column;
    flex: none;
}

/* shared header widgets */
.hdr {
    height: 15px;
    background: #303030;
    display: flex;
    align-items: center;
    padding-left: 5px;
    flex: none;
    border-radius: 3px 3px 0 0;
}

.dd {
    height: 12px;
    display: flex;
    align-items: center;
    border-radius: 2px;
    background: #2a2a2a;
    padding: 0 1px 0 2px;
    flex: none;
}

.dd .ic + .grow {
    margin-left: 4px;
}

.muted {
    color: #6e6e6e;
}

.btn {
    width: 12px;
    height: 12px;
    display: flex;
    align-items: center;
    justify-content: center;
    background: #545454;
    color: #d8d8d8;
    flex: none;
    border-radius: 2px;
}

.btn.on {
    background: #4772b3;
    color: #fff;
}

.btn.off {
    background: #3d3d3d;
    color: #8f8f8f;
}

.seg {
    display: flex;
    flex: none;
}

.seg .btn {
    border-radius: 0;
}

.seg .btn:first-child {
    border-radius: 2px 0 0 2px;
}

.seg .btn:last-child {
    border-radius: 0 2px 2px 0;
}

.hdr-right {
    margin-left: auto;
    display: flex;
    align-items: center;
}

.chev-gap {
    margin: 0 2px;
}

.chev-wide {
    margin: 0 8px 0 2px;
}

.chev-mid {
    margin: 0 4px 0 2px;
}

/* 3d view header */
.et {
    width: 20px;
}

.mode {
    width: 69px;
    margin: 0 3px;
    padding-left: 3px;
}

.seg3 .btn {
    width: 12.300px;
}

.curve-btn {
    margin-left: 4px;
}

.curve-dd {
    width: 60px;
    padding-left: 5px;
    margin-right: 1px;
    background: #2d2d2d;
}

.multi-dd {
    width: 52px;
    padding-left: 5px;
    background: #2d2d2d;
}

.global {
    width: 48px;
    margin-left: 11px;
    padding-left: 3px;
}

.snap {
    width: 18px;
    margin-left: 6px;
}

.magnet {
    margin-left: 4px;
}

.snap-t {
    width: 19px;
}

.prop-btn {
    margin-left: 5px;
}

.hdr-right .gz {
    width: 18px;
    margin-right: 4px;
}

.xray {
    margin: 0 5px 0 4px;
}

.shade .btn {
    border-radius: 0;
}

.view > .hdr .hdr-right {
    padding-right: 5px;
}

/* tool settings */
.hdr2 {
    height: 16px;
    background: #5e5e5e;
    display: flex;
    align-items: center;
    padding-left: 27px;
    flex: none;
}

.sel-modes {
    background: #525252;
    border-radius: 2px;
}

.tm {
    width: 11.800px;
    height: 11px;
    display: block;
    position: relative;
}

.tm::before {
    content: "";
    position: absolute;
    inset: 2px;
    background: #d6d6d6;
}

.tm.on {
    background: #4772b3;
    border-radius: 2px 0 0 2px;
}

.tm.on::before {
    background: none;
    border: 1px dashed #fff;
}

.t3::before, .t4::before {
    background: none;
    border: 1px solid #ddd;
}

.t5::before {
    inset: 3px;
}

.hdr2-right {
    margin-left: auto;
    padding-right: 5px;
    display: flex;
    align-items: center;
}

.lay-lbl {
    color: #a8a8a8;
    margin-right: 5px;
}

.dark-dd {
    height: 12px;
    display: flex;
    align-items: center;
    background: #1d1d1d;
    color: #d0d0d0;
    border-radius: 2px;
    padding: 0 1px 0 5px;
}

.hdr2-right .dark-dd {
    width: 100px;
}

/* viewport */
.canvas {
    flex: 1;
    position: relative;
    background: #b3b3b3;
    overflow: hidden;
    border-radius: 0 0 3px 3px;
}

.vp-text {
    position: absolute;
    left: 39px;
    top: 5px;
    line-height: 12px;
    color: #f6f6f6;
    text-shadow: 0 0 1px #777;
}

.vp-green {
    color: #a2da1c;
    margin-left: 1px;
}

.toolbar {
    position: absolute;
    left: 4px;
    top: 5px;
    width: 25px;
    display: flex;
    flex-direction: column;
    gap: 2.500px;
}

.tgroup {
    background: #2a2a2a;
    border-radius: 3px;
    box-shadow: 0 0 1px #222;
    overflow: hidden;
}

.tool {
    height: 22px;
    display: flex;
    align-items: center;
    justify-content: center;
    color: #dcdcdc;
    border-bottom: 1px solid #232323;
}

.tool:last-child {
    border-bottom: 0;
}

.tool.on {
    background: #4772b3;
}

.sheet {
    position: absolute;
    left: 324.500px;
    top: 55.500px;
    width: 341px;
    height: 341px;
    background: #fafafa;
    outline: 1px dashed #555;
}

.sheet-svg {
    position: absolute;
    inset: 0;
    width: 100%;
    height: 100%;
}

.guides path {
    stroke: #a0a0a0;
    stroke-width: 0.8;
    stroke-dasharray: 1.500 1.500;
}

.stroke-shape {
    fill: #000;
    stroke: #f08a00;
    stroke-width: 0.8;
}

.pt-orange {
    fill: #ff8c00;
    stroke: none;
}

.pt-black {
    fill: #000;
    stroke: none;
}

.note {
    position: absolute;
    left: 175.500px;
    top: 218px;
    font-family: "Liberation Sans", sans-serif;
    font-size: 8.700px;
    line-height: 13px;
    color: #f2333b;
    white-space: nowrap;
}

.popup {
    position: absolute;
    left: 409px;
    top: 110px;
    width: 169px;
    height: 140px;
    background: #181818;
    border-radius: 3px;
    padding: 0 3px 0 2px;
}

.pop-title {
    height: 18px;
    line-height: 18px;
    margin: 0 -3px 0 -2px;
    text-indent: 6px;
    color: #8f8f8f;
    border-bottom: 1px solid #262626;
}

.pop-item {
    height: 13.700px;
    display: flex;
    align-items: center;
    justify-content: space-between;
    padding: 0 2px 0 19px;
    border-radius: 2px;
    color: #c8c8c8;
}

.pop-title + .pop-item {
    margin-top: 2px;
}

.pop-item.hot {
    height: 11px;
    margin: 1.300px 0 1.400px;
    background: #4772b3;
    color: #e8e8e8;
}

.pop-item u {
    text-underline-offset: 2px;
    text-decoration-color: #999;
}

.sc {
    color: #6b6b6b;
}

.hot .sc {
    color: #9db2d4;
}

.pop-sep {
    height: 1px;
    margin: 2px -3px 2.400px -2px;
    background: #262626;
}

.tip {
    position: absolute;
    left: 525px;
    top: 196px;
    width: 228px;
    height: 28px;
    background: #181818;
    border-radius: 3px;
    padding: 5px 8px;
    line-height: 9px;
    color: #b5b5b5;
    white-space: nowrap;
}

.tip-op {
    color: #7c8db3;
}

.tip-dim {
    color: #969696;
}

.axis {
    position: absolute;
    left: 929px;
    top: 2px;
    width: 60px;
    height: 60px;
    overflow: visible;
}

.ax-b {
    stroke: #6da3e8;
    stroke-width: 1.200;
}

.ax-r {
    stroke: #ef8f97;
    stroke-width: 1.200;
}

.n-b {
    fill: #5e9cf0;
    stroke: none;
}

.n-bp {
    fill: #b9d2f5;
    stroke: #6da3e8;
}

.n-rp {
    fill: #fdbcc0;
    stroke: #f0707a;
}

.n-r {
    fill: #f4616f;
    stroke: none;
}

.n-g {
    fill: #8ccc0c;
    stroke: none;
}

.ax-t {
    fill: #1c1c1c;
    stroke: none;
    font-size: 6.400px;
    font-weight: bold;
    text-anchor: middle;
}

.nav-btns {
    position: absolute;
    left: 969px;
    top: 58px;
    display: flex;
    flex-direction: column;
    gap: 2.500px;
}

.nav {
    width: 16px;
    height: 16px;
    border-radius: 50%;
    background: #8a8a8a;
    color: #f0f0f0;
    display: flex;
    align-items: center;
    justify-content: center;
}

.nav .ic-t {
    width: 12px;
    height: 12px;
}

.side-tab {
    position: absolute;
    right: 0;
    top: 10px;
    width: 6px;
    height: 10px;
    background: #909090;
    border-radius: 3px 0 0 3px;
}

.last-op {
    position: absolute;
    left: 37px;
    top: 450px;
    width: 100px;
    height: 15px;
    background: #1c1c1c;
    border-radius: 3px;
    display: flex;
    align-items: center;
    padding-left: 9px;
    gap: 3px;
    color: #858585;
}

/* timeline */
.timeline {
    flex: 1;
    margin-top: 2px;
    display: flex;
    flex-direction: column;
}

.tl-hdr {
    height: 17px;
}

.gp-dd {
    width: 76px;
    margin: 0 4px 0 3px;
    padding-left: 3px;
}

.tl-add {
    margin-left: 4px;
    margin-right: 2px;
}

.tl-arrows {
    margin-left: 7px;
}

.tl-vis {
    margin-left: 4px;
}

.tl-filter {
    width: 18px;
    margin: 0 4px 0 6px;
}

.tl-fall {
    width: 17px;
    margin: 0 4px 0 4px;
    background: none;
}

.tl-body {
    height: 73px;
    display: flex;
    flex: none;
    background: #232323;
}

.channels {
    width: 124px;
    flex: none;
    overflow: hidden;
}

.ch-search {
    height: 14px;
    display: flex;
    align-items: center;
    background: #2b2b2b;
}

.ch-input {
    width: 108px;
    height: 12px;
    background: #1d1d1d;
    display: flex;
    align-items: center;
    padding-left: 1px;
    border-radius: 0 2px 2px 0;
}

.ch-sw {
    width: 14px;
    margin-left: 1px;
}

.ch {
    height: 11.500px;
    display: flex;
    align-items: center;
    white-space: nowrap;
}

.ic-a {
    width: 8px;
    height: 8px;
    color: #eee;
    margin: 0 3px 0 0;
}

.ch-sum {
    background: #4a2b2b;
    color: #b8a6a6;
}

.ch-obj {
    background: #27476a;
    color: #c4ced8;
}

.ch-obj .ic {
    margin: 0 2px 0 -1px;
}

.ch-lay {
    background: #2a2a2a;
    color: #a5a5a5;
    padding-left: 9px;
}

.ch-act {
    color: #f09a2a;
}

.ch-name {
    width: 32px;
    flex: none;
}

.ch-val {
    width: 29px;
    height: 10px;
    background: #545454;
    border-radius: 2px;
    text-align: center;
    line-height: 10px;
    margin-right: 1px;
    color: #d0d0d0;
}

.ic-f {
    width: 8px;
    height: 8px;
    margin-left: 2.500px;
    color: #e8e8e8;
}

.dope {
    flex: 1;
    position: relative;
    overflow: hidden;
}

.ruler {
    height: 14px;
    display: flex;
    padding-left: 52px;
    background: #272727;
    color: #9a9a9a;
    line-height: 14px;
}

.ruler span {
    width: 54.200px;
    text-align: center;
    flex: none;
}

.rows {
    position: absolute;
    left: 0;
    right: 0;
    top: 14px;
    bottom: 0;
}

.rows::after {
    content: "";
    position: absolute;
    inset: 0;
    background-image:
        repeating-linear-gradient(90deg, rgba(0, 0, 0, 0.28) 0, rgba(0, 0, 0, 0.28) 1px, transparent 1px, transparent 54.200px),
        repeating-linear-gradient(90deg, rgba(0, 0, 0, 0.1) 0, rgba(0, 0, 0, 0.1) 1px, transparent 1px, transparent 27.100px);
    background-position: 25px 0;
}

.r {
    height: 11.500px;
}

.r-sum {
    background: #3b2a2a;
}

.r-obj {
    background: #2d2d2d;
}

.r-act {
    background: #3f5a34;
}

.r-lay {
    border-bottom: 1px solid #2a2a2a;
}

.out-range {
    position: absolute;
    left: 702px;
    right: 0;
    top: 14px;
    bottom: 0;
    background: rgba(0, 0, 0, 0.25);
}

.hscroll {
    position: absolute;
    left: 7px;
    right: 8px;
    bottom: 3px;
    height: 5px;
    border-radius: 3px;
    background: #555;
}

.vscroll {
    position: absolute;
    right: 3px;
    top: 8px;
    width: 2px;
    height: 41px;
    background: #3a3a3a;
}

.playhead {
    position: absolute;
    left: 26.300px;
    top: 12px;
    bottom: 0;
    width: 2px;
    background: #4a78c0;
}

.frame-tag {
    position: absolute;
    left: 20px;
    top: 2px;
    width: 14px;
    height: 11px;
    background: #4772b3;
    border-radius: 2px;
    color: #eee;
    text-align: center;
    line-height: 11px;
}

.key {
    position: absolute;
    left: 25.800px;
    width: 3px;
    height: 3px;
    background: #e8e8e8;
    transform: rotate(45deg);
}

.k1 {
    top: 18px;
}

.k2 {
    top: 41px;
}

.k3 {
    top: 52.500px;
    background: #555;
}

.tl-side {
    width: 137px;
    flex: none;
    padding: 2px 4px 0 4px;
    background: #232323;
}

.panel {
    background: #3d3d3d;
    border-radius: 3px;
}

.tl-panel {
    height: 71px;
    border-radius: 3px 3px 0 0;
}

.ph {
    height: 16px;
    display: flex;
    align-items: center;
    padding: 0 3px 0 5px;
    gap: 2px;
    color: #c6c6c6;
}

.tl-panel .ph {
    height: 15px;
    margin-bottom: 4.700px;
}

.pr {
    display: flex;
    align-items: center;
    height: 12px;
    margin-bottom: 3.500px;
}

.pr label {
    width: 72px;
    text-align: right;
    padding-right: 6px;
    flex: none;
    color: #b8b8b8;
    white-space: nowrap;
}

.pr .dark-dd, .pr .num, .pr .swatch {
    width: 90px;
    flex: none;
}

.num {
    height: 11px;
    background: #545454;
    border-radius: 2px;
    text-align: center;
    line-height: 11px;
    color: #d8d8d8;
    display: block;
}

.num-on {
    background: #4772b3;
    color: #f0f0f0;
}

.num-half {
    background: linear-gradient(90deg, #4772b3 50%, #545454 50%);
}

.cb {
    display: flex;
    align-items: center;
    gap: 2px;
    color: #d0d0d0;
    width: 90px;
}

.ic-c {
    width: 8px;
    height: 8px;
}

.ic-d {
    width: 7px;
    height: 7px;
    margin-left: 4px;
    color: #ccc;
}

.tl-panel .pr label {
    width: 55px;
}

.tl-panel .pr .dark-dd, .tl-panel .pr .num {
    width: 66px;
}

/* playback */
.play-hdr {
    margin-top: 1px;
    border-radius: 0;
}

.pb-dd {
    width: 42px;
    margin: 0 1px 0 3px;
    padding-left: 4px;
}

.kb-dd {
    width: 36px;
    padding-left: 4px;
    margin-right: 1px;
}

.rec-btn {
    margin-left: 274px;
}

.transport {
    margin-left: 5px;
    background: #545454;
    border-radius: 2px;
}

.transport .btn {
    width: 12.500px;
}

.play-hdr .hdr-right {
    padding-right: 5px;
}

.cur-frame {
    width: 47px;
    margin-right: 3px;
}

.clock {
    background: #3d3d3d;
    border-radius: 2px 0 0 2px;
}

.range {
    display: flex;
    justify-content: space-between;
    padding: 0 5px 0 9px;
    border-radius: 0;
    margin-left: 1px;
}

.r-start {
    width: 53px;
}

.r-end {
    width: 52px;
    border-radius: 0 2px 2px 0;
}

/* outliner */
.outliner {
    height: 170px;
    background: #282828;
    flex: none;
    border-radius: 3px;
    overflow: hidden;
}

.out-hdr {
    padding-left: 4px;
}

.out-dd {
    width: 20px;
    margin-right: 4px;
}

.search {
    height: 12px;
    background: #1d1d1d;
    border-radius: 2px;
    display: flex;
    align-items: center;
    padding-left: 1px;
}

.out-search {
    width: 68px;
    margin-left: 9px;
}

.out-filter {
    width: 20px;
    margin-left: 37px;
}

.out-new {
    margin-left: 4px;
    width: 11px;
}

.tree {
    position: relative;
    padding-top: 1.500px;
}

.tree-line {
    position: absolute;
    left: 17px;
    top: 24px;
    width: 1px;
    height: 98px;
    background: #4a4a4a;
}

.o {
    height: 12.500px;
    display: flex;
    align-items: center;
    position: relative;
    white-space: nowrap;
}

.o:nth-child(even) {
    background: #2b2b2b;
}

.l0 {
    padding-left: 0;
}

.l1 {
    padding-left: 13px;
}

.l2 {
    padding-left: 25.500px;
}

.l3 {
    padding-left: 38px;
}

.l4 {
    padding-left: 50.500px;
}

.ar {
    width: 8px;
    height: 8px;
    color: #d0d0d0;
    flex: none;
}

.oi {
    width: 12px;
    height: 12px;
    margin: 0 3px 0 3px;
    display: flex;
    align-items: center;
    justify-content: center;
    border-radius: 2px;
    color: #d8d8d8;
    flex: none;
}

.boxed {
    background: #4f4f4f;
}

.o-org {
    color: #e89a3c;
}

.o-grn {
    color: #2fae8a;
}

.o-blu {
    color: #4f7fc0;
}

.ot {
    color: #c4c4c4;
}

.dimt {
    color: #a8a8a8;
}

.org {
    color: #eb9a33;
}

.sel {
    background: #2f4b7e !important;
}

.sel-mode {
    position: absolute;
    left: 1px;
    top: 1.500px;
    width: 9px;
    height: 9px;
    color: #8fb4ea;
}

.fl3 {
    margin-left: auto;
    padding-right: 7px;
    display: flex;
    gap: 2.500px;
    color: #dadada;
}

.fl-one .ic {
    color: #bbb;
}

.o-extra {
    margin-left: 11px;
}

.o-extra2 {
    margin-left: 10px;
}

/* properties */
.props {
    flex: 1;
    margin-top: 3px;
    background: #2f2f2f;
    overflow: hidden;
    border-radius: 3px 3px 0 0;
    display: flex;
    flex-direction: column;
}

.prop-hdr {
    height: 16px;
    padding-left: 6px;
}

.prop-et {
    width: 18px;
}

.prop-search {
    width: 68px;
    margin-left: 45px;
}

.prop-opt {
    margin-left: auto;
    margin-right: 6px;
    width: 10px;
    background: #3d3d3d;
}

.prop-body {
    flex: 1;
    display: flex;
    min-height: 0;
}

.ptabs {
    width: 16px;
    background: #1d1d1d;
    display: flex;
    flex-direction: column;
    align-items: stretch;
    flex: none;
}

.pt {
    height: 17.600px;
    display: flex;
    align-items: center;
    justify-content: center;
    color: #cfcfcf;
    flex: none;
}

.pt.first {
    margin-top: 4px;
}

.pt.gap {
    margin-top: 5.300px;
}

.pt-on {
    background: #303030;
    color: #2fae8a;
}

.c-red {
    color: #c9504a;
}

.c-org {
    color: #e8a060;
}

.c-blu {
    color: #5c8fd0;
}

.pcontent {
    flex: 1;
    padding: 0 5px;
    min-width: 0;
    overflow: hidden;
}

.crumb {
    height: 14px;
    margin-top: 5px;
    display: flex;
    align-items: center;
    gap: 2px;
    padding: 0 1px 0 6px;
}

.crumb-sep {
    margin: 0 3px;
}

.datablock {
    height: 12px;
    margin-top: 9px;
    display: flex;
    align-items: center;
}

.db-dd {
    width: 20px;
    margin-left: 1px;
}

.db-name {
    width: 147px;
    height: 12px;
    background: #1d1d1d;
    padding: 2.500px 4px;
}

.db-shield {
    width: 11px;
    margin-left: 1px;
    background: #545454;
}

.layers-panel {
    margin-top: 6px;
    height: 314.500px;
}

.layers-panel .ph {
    padding-left: 6px;
}

.list-wrap {
    display: flex;
    height: 104px;
    padding: 5px 0 0 6px;
}

.list {
    width: 152px;
    height: 99px;
    background: #282828;
    border-radius: 2px;
    padding: 3px;
    position: relative;
}

.li {
    height: 12.500px;
    display: flex;
    align-items: center;
    padding: 0 2px 0 17px;
    color: #6f6f6f;
    border-radius: 2px;
    white-space: nowrap;
}

.li-on {
    background: #545454;
    color: #cfcfcf;
}

.ic-l {
    width: 9px;
    height: 9px;
    margin-left: 3.500px;
    color: #cfcfcf;
}

.list-foot {
    position: absolute;
    left: 8px;
    right: 8px;
    bottom: 4px;
    display: flex;
    align-items: center;
}

.grip-mid {
    margin-left: 60px;
    opacity: 0.4;
}

.list-btns {
    display: flex;
    flex-direction: column;
    margin-left: 6px;
    width: 11px;
    align-items: stretch;
}

.vseg {
    display: flex;
    flex-direction: column;
}

.vseg .btn {
    width: 11px;
    border-radius: 0;
}

.vseg .btn:first-child {
    border-radius: 2px 2px 0 0;
}

.vseg .btn:last-child {
    border-radius: 0 0 2px 2px;
}

.list-btns .list-more {
    width: 11px;
    margin: 4px 0 8px;
    background: #232323;
}

.list-btns .vseg + .vseg {
    margin-top: 7px;
}

.pr-blend {
    margin-top: 18.500px;
    height: 13px;
    margin-bottom: 3px;
}

.pr-op {
    height: 12px;
    margin-bottom: 4px;
}

.pr-blend .dark-dd {
    height: 13px;
}

.sub {
    height: 15.500px;
    display: flex;
    align-items: center;
    padding-left: 13px;
    gap: 3px;
    color: #b8b8b8;
}

.sub-first {
    margin-top: 5.500px;
}

.mask-box {
    width: 8px;
    height: 8px;
    background: #545454;
    border-radius: 1px;
    margin-right: -1px;
}

.sub-body {
    height: 50px;
    background: #373737;
    padding-top: 5.500px;
}

.pr-tint {
    height: 11.500px;
    margin-bottom: 1px;
}

.pr-stroke {
    margin-top: 3.500px;
}

.swatch {
    height: 11.500px;
    background: #000;
    border-radius: 1px;
}

.onion-panel {
    margin-top: 2px;
    height: 70px;
    border-radius: 3px 3px 0 0;
}

.onion-panel .ph {
    padding-left: 6px;
}

.pr-mode {
    margin-top: 6.500px;
    margin-bottom: 2px;
}

.pr-half {
    margin-bottom: 2px;
}

/* status bar */
.status {
    height: 13px;
    background: #1d1d1d;
    display: flex;
    align-items: center;
    padding-left: 5px;
    color: #767676;
    flex: none;
}

.st {
    width: 132px;
    display: flex;
    align-items: center;
}

.st .ic {
    margin-right: 5px;
    color: #9a9a9a;
}

.version {
    margin-left: auto;
    padding-right: 5px;
    color: #6e6e6e;
}
```
